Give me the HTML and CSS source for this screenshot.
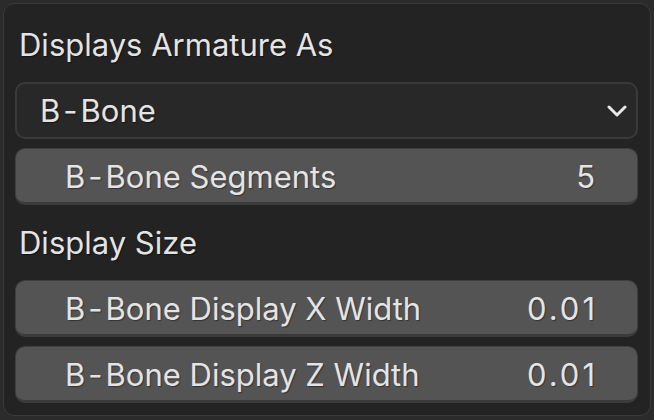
FILE: index.html
```html
<!DOCTYPE html>
<html lang="en">
<head>
  <meta charset="UTF-8" />
  <title>Armature Display</title>
  <link rel="stylesheet" href="styles.css">
</head>
<body>
  <div class="panel">
    <div class="label">Displays Armature As</div>

    <div class="dropdown">
      <span>B<span class="dash">-</span>Bone</span>
      <svg class="chevron" width="20" height="12" viewBox="0 0 20 12">
        <path d="M2 2 L10 10 L18 2" fill="none" stroke="#e8e8e8" stroke-width="3" stroke-linecap="round" stroke-linejoin="round"/>
      </svg>
    </div>

    <div class="field">
      <span>B<span class="dash">-</span>Bone Segments</span>
      <span class="value">5</span>
    </div>

    <div class="label">Display Size</div>

    <div class="field">
      <span>B<span class="dash">-</span>Bone Display X Width</span>
      <span class="value">0.01</span>
    </div>

    <div class="field">
      <span>B<span class="dash">-</span>Bone Display Z Width</span>
      <span class="value">0.01</span>
    </div>
  </div>
</body>
</html>
```

FILE: styles.css
```css
html, body {
  height: 100%;
}

body {
  margin: 0;
  background-color: #2b2b2b;
  font-family: Inter, "Noto Sans", sans-serif;
  font-size: 31px;
  color: #e4e4e4;
}

.panel {
  margin: 3px 3px 0 3px;
  height: 413px;
  box-sizing: border-box;
  border: 1px solid #3a3a3a;
  border-radius: 11px;
  background-color: #232323;
  padding: 12px 12px 12px 11px;
  display: flex;
  flex-direction: column;
  gap: 9px;
}

.label {
  height: 57px;
  display: flex;
  align-items: center;
  padding-left: 4px;
  text-shadow: 1px 1px 1px rgba(0, 0, 0, 0.5);
}

.dash {
  margin: 0 3px;
}

.dropdown {
  height: 57px;
  box-sizing: border-box;
  border: 2px solid #3a3a3a;
  border-radius: 10px;
  background-color: #282828;
  display: flex;
  align-items: center;
  justify-content: space-between;
  padding: 0 9px 0 23px;
  text-shadow: 1px 1px 1px rgba(0, 0, 0, 0.5);
}

.chevron {
  display: block;
}

.field {
  height: 57px;
  box-sizing: border-box;
  border: 1px solid #3f3f3f;
  border-bottom: 3px solid #3b3b3b;
  border-radius: 10px;
  background-color: #545454;
  display: flex;
  align-items: center;
  justify-content: space-between;
  padding: 2px 42px 0 49px;
  text-shadow: 1px 1px 1px rgba(0, 0, 0, 0.4);
}

.value {
  letter-spacing: 3px;
  margin-right: -3px;
}
```
